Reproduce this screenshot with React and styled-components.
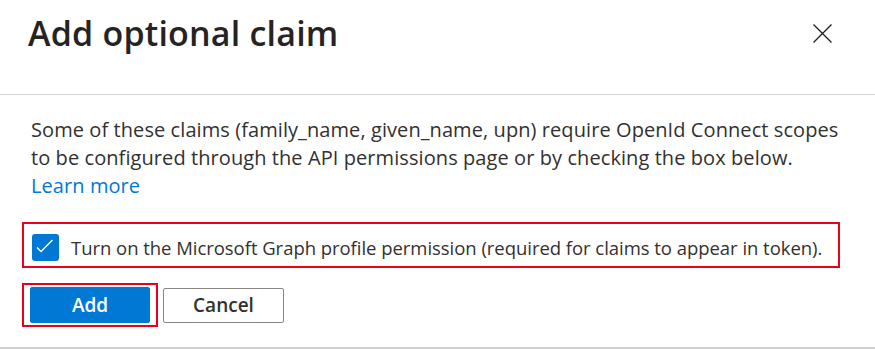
import React from 'react'
import styled, { createGlobalStyle } from 'styled-components'

const Global = createGlobalStyle`
  html, body { margin: 0; padding: 0; background: #fff; }
  body { font-family: "Open Sans", "Noto Sans", sans-serif; color: #323130; }
`

const Panel = styled.div`
  width: 875px;
  height: 349px;
  display: flex;
  flex-direction: column;
  box-sizing: border-box;
  border-bottom: 2px solid #cfcfcf;
  overflow: hidden;
`

const Header = styled.div`
  height: 95px;
  flex-shrink: 0;
  box-sizing: border-box;
  border-bottom: 1px solid #d6d6d6;
  display: flex;
  align-items: flex-start;
  justify-content: space-between;
  padding: 9px 43px 0 28px;
`

const Title = styled.h1`
  margin: 0;
  font-size: 34px;
  font-weight: 600;
  line-height: 48px;
  letter-spacing: 0.2px;
  color: #252423;
`

const CloseButton = styled.button`
  border: none;
  background: none;
  padding: 0;
  margin-top: 15px;
  width: 19px;
  height: 19px;
  cursor: pointer;
`

const Body = styled.div`
  padding: 21px 29px 0 31px;
  display: flex;
  flex-direction: column;
`

const Description = styled.p`
  margin: 0;
  font-size: 20px;
  line-height: 28px;
  color: #323130;
  letter-spacing: 0.08px;
`

const Link = styled.a`
  color: #0078d4;
  text-decoration: none;
`

const Highlight = styled.div`
  border: 2px solid #e8001c;
  box-sizing: border-box;
  margin-top: ${p => p.$mt || 0}px;
  margin-left: -9px;
  display: flex;
  align-items: center;
  width: ${p => p.$w}px;
  height: ${p => p.$h}px;
  padding: ${p => p.$pt || 0}px 0 0 ${p => p.$pl || 0}px;
`

const CheckBox = styled.span`
  width: 27px;
  height: 27px;
  border-radius: 3px;
  background: #0078d4;
  display: flex;
  flex-shrink: 0;
`

const CheckLabel = styled.span`
  margin-left: 12px;
  font-size: 18.5px;
  letter-spacing: -0.04px;
  color: #323130;
  white-space: nowrap;
`

const Actions = styled.div`
  display: flex;
  align-items: center;
  margin-top: 15px;
  gap: 5px;
`

const Button = styled.button`
  width: ${p => p.$w}px;
  height: ${p => p.$h}px;
  border-radius: 2px;
  font-family: "Open Sans", "Noto Sans", sans-serif;
  font-size: 19px;
  font-weight: 600;
  cursor: pointer;
  background: ${p => (p.$primary ? '#0078d4' : '#fff')};
  color: ${p => (p.$primary ? '#fff' : '#323130')};
  border: 1px solid ${p => (p.$primary ? '#0078d4' : '#8a8886')};
  padding: 0;
`

export default function App() {
  return (
    <>
      <Global />
      <Panel>
        <Header>
          <Title>Add optional claim</Title>
          <CloseButton aria-label="Close">
            <svg width="19" height="19" viewBox="0 0 19 19">
              <path d="M0.5 0.5 L18.5 18.5 M18.5 0.5 L0.5 18.5" stroke="#201f1e" strokeWidth="1.3" fill="none" />
            </svg>
          </CloseButton>
        </Header>
        <Body>
          <Description>
            Some of these claims (family_name, given_name, upn) require OpenId Connect scopes
            <br />
            to be configured through the API permissions page or by checking the box below.
            <br />
            <Link href="#">Learn more</Link>
          </Description>
          <Highlight $mt={22} $w={818} $h={46} $pt={4} $pl={8}>
            <CheckBox>
              <svg width="27" height="27" viewBox="0 0 27 27">
                <path d="M5 13.5 L9 17.5 L20.5 6" stroke="#fff" strokeWidth="1.4" fill="none" />
              </svg>
            </CheckBox>
            <CheckLabel>
              Turn on the Microsoft Graph profile permission (required for claims to appear in token).
            </CheckLabel>
          </Highlight>
          <Actions>
            <Highlight $w={136} $h={44} $pl={6}>
              <Button $primary $w={120} $h={36}>Add</Button>
            </Highlight>
            <Button $w={121} $h={35}>Cancel</Button>
          </Actions>
        </Body>
      </Panel>
    </>
  )
}
